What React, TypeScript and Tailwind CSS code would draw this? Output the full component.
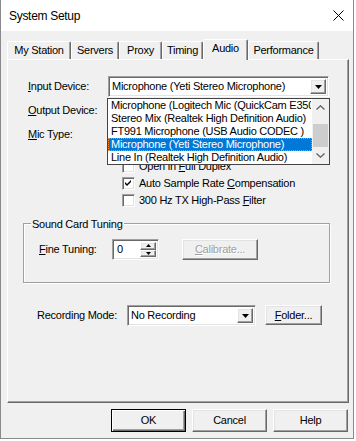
import React from 'react';

// classic win32 3d borders
const raised =
    'border border-t-white border-l-white border-r-[#696969] border-b-[#696969] shadow-[inset_-1px_-1px_0_#a0a0a0,inset_1px_1px_0_#e3e3e3]';
const sunken =
    'border border-t-[#a0a0a0] border-l-[#a0a0a0] border-r-white border-b-white shadow-[inset_1px_1px_0_#696969,inset_-1px_-1px_0_#e3e3e3]';

function Key({ children }: { children: React.ReactNode }) {
    return <span className="underline underline-offset-[1px] decoration-1">{children}</span>;
}

function DownTriangle() {
    return (
        <svg width="7" height="4" viewBox="0 0 7 4">
            <polygon points="0,0 7,0 3.5,4" fill="#000" />
        </svg>
    );
}

function Combo({ width, text }: { width: string; text: string }) {
    return (
        <div className={`${sunken} ${width} h-[21px] bg-white flex items-center p-[2px]`}>
            <span className="flex-1 pl-[1px] whitespace-nowrap overflow-hidden">{text}</span>
            <div className={`${raised} w-[16px] h-full bg-[#f0f0f0] flex items-center justify-center`}>
                <DownTriangle />
            </div>
        </div>
    );
}

function Tab({ label, width, active }: { label: string; width: string; active?: boolean }) {
    return (
        <div
            className={`${width} ${
                active ? 'h-[21px] -mb-[1px] relative z-10 pb-[3px]' : 'h-[18px]'
            } bg-[#f0f0f0] border-t border-l border-r border-t-white border-l-white border-r-[#696969] shadow-[inset_-1px_0_0_#a0a0a0] rounded-t-[2px] flex items-center justify-center whitespace-nowrap`}
        >
            {label}
        </div>
    );
}

function CheckBox({ checked, children }: { checked?: boolean; children: React.ReactNode }) {
    return (
        <div className="h-[17px] flex items-center gap-[4px] pl-[94px]">
            <div className={`${sunken} w-[13px] h-[13px] bg-white flex items-center justify-center`}>
                {checked && (
                    <svg width="7" height="7" viewBox="0 0 7 7">
                        <path d="M0 2 L2 4 L6 0 L6 2 L2 6 L0 4 Z" fill="#000" />
                    </svg>
                )}
            </div>
            <span>{children}</span>
        </div>
    );
}

function Button({ children, width, isDefault, disabled }: { children: React.ReactNode; width: string; isDefault?: boolean; disabled?: boolean }) {
    const frame = isDefault
        ? 'border border-black shadow-[inset_1px_1px_0_#fff,inset_-1px_-1px_0_#696969,inset_-2px_-2px_0_#a0a0a0]'
        : raised;
    return (
        <div
            className={`${frame} ${width} bg-[#f0f0f0] flex items-center justify-center ${
                disabled ? 'text-[#a0a0a0] [text-shadow:1px_1px_0_#fff]' : ''
            }`}
        >
            {children}
        </div>
    );
}

const devices = [
    'Microphone (Logitech Mic (QuickCam E3500))',
    'Stereo Mix (Realtek High Definition Audio)',
    'FT991 Microphone (USB Audio CODEC )',
    'Microphone (Yeti Stereo Microphone)',
    'Line In (Realtek High Definition Audio)',
];

export default function App() {
    return (
        <div className="w-[356px] h-[441px] bg-white overflow-hidden font-['Liberation_Sans',Arial,sans-serif] text-[11px] tracking-[-0.25px] text-black">
            <div className="w-[354px] h-[439px] border border-t-0 border-[#8a8a8a] bg-[#f0f0f0]">
                {/* Title bar */}
                <div className="h-[31px] bg-white flex items-center justify-between pl-[8px] pr-[9px]">
                    <span className="text-[12px] tracking-[-0.3px]">System Setup</span>
                    <svg width="11" height="11" viewBox="0 0 11 11">
                        <path d="M0.5 0.5 L10.5 10.5 M10.5 0.5 L0.5 10.5" stroke="#000" strokeWidth="1" />
                    </svg>
                </div>

                {/* Tabs */}
                <div className="mt-[8px] ml-[6px] h-[20px] flex items-end">
                    <Tab label="My Station" width="w-[64px]" />
                    <Tab label="Servers" width="w-[48px]" />
                    <Tab label="Proxy" width="w-[43px]" />
                    <Tab label="Timing" width="w-[41px]" />
                    <Tab label="Audio" width="w-[45px]" active />
                    <Tab label="Performance" width="w-[71px]" />
                </div>

                {/* Tab panel */}
                <div className="relative ml-[6px] w-[342px] h-[344px] border border-t-white border-l-white border-r-[#696969] border-b-[#696969] shadow-[inset_-1px_-1px_0_#a0a0a0]">
                    <div className="pt-[16px]">
                        <div className="flex items-center h-[21px] pl-[20px]">
                            <span className="w-[80px]">
                                <Key>I</Key>nput Device:
                            </span>
                            <Combo width="w-[221px]" text="Microphone (Yeti Stereo Microphone)" />
                        </div>
                        <div className="flex items-center h-[21px] pl-[20px] mt-[3px]">
                            <span className="w-[80px]">
                                <Key>O</Key>utput Device:
                            </span>
                            <Combo width="w-[221px]" text="" />
                        </div>
                        <div className="flex items-center h-[21px] pl-[20px] mt-[3px]">
                            <span className="w-[80px]">
                                <Key>M</Key>ic Type:
                            </span>
                            <Combo width="w-[221px]" text="" />
                        </div>

                        <div className="mt-[13px] pl-[20px]">
                            <CheckBox>
                                Open in <Key>F</Key>ull Duplex
                            </CheckBox>
                            <CheckBox checked>
                                Auto Sample Rate <Key>C</Key>ompensation
                            </CheckBox>
                            <CheckBox>
                                300 Hz TX High-Pass <Key>F</Key>ilter
                            </CheckBox>
                        </div>

                        {/* Sound Card Tuning group */}
                        <div className="relative ml-[15px] mt-[14px] w-[307px] h-[60px] border border-[#a0a0a0] shadow-[inset_1px_1px_0_#fff,1px_1px_0_#fff]">
                            <span className="absolute left-[7px] -top-[8px] px-[1px] bg-[#f0f0f0]">Sound Card Tuning</span>
                            <div className="flex items-center h-[21px] pl-[15px] mt-[15px]">
                                <span className="w-[73px]">
                                    <Key>F</Key>ine Tuning:
                                </span>
                                <div className={`${sunken} w-[47px] h-[21px] bg-white flex items-stretch p-[2px]`}>
                                    <span className="flex-1 pl-[2px] flex items-center">0</span>
                                    <div className="w-[16px] flex flex-col">
                                        <div className={`${raised} flex-1 bg-[#f0f0f0] flex items-center justify-center`}>
                                            <svg width="5" height="3" viewBox="0 0 5 3">
                                                <polygon points="2.5,0 5,3 0,3" fill="#000" />
                                            </svg>
                                        </div>
                                        <div className={`${raised} flex-1 bg-[#f0f0f0] flex items-center justify-center`}>
                                            <svg width="5" height="3" viewBox="0 0 5 3">
                                                <polygon points="0,0 5,0 2.5,3" fill="#000" />
                                            </svg>
                                        </div>
                                    </div>
                                </div>
                                <div className="ml-[23px] h-[21px] flex">
                                    <Button width="w-[76px]" disabled>
                                        <span>
                                            <Key>C</Key>alibrate...
                                        </span>
                                    </Button>
                                </div>
                            </div>
                        </div>

                        {/* Recording */}
                        <div className="flex items-center h-[21px] pl-[29px] mt-[22px]">
                            <span className="w-[90px]">Recording Mode:</span>
                            <Combo width="w-[129px]" text="No Recording" />
                            <div className="ml-[9px] h-[20px] flex self-start">
                                <Button width="w-[57px]">
                                    <span>
                                        <Key>F</Key>older...
                                    </span>
                                </Button>
                            </div>
                        </div>
                    </div>

                    {/* Open drop-down list of the Input Device combo */}
                    <div className="absolute left-[99px] top-[38px] w-[223px] h-[67px] border border-[#444] bg-white flex z-20">
                        <div className="flex-1 flex flex-col overflow-hidden">
                            {devices.map((d, i) => (
                                <div
                                    key={d}
                                    className={`h-[13px] leading-[11px] pl-[2px] whitespace-nowrap overflow-hidden border ${
                                        i === 3 ? 'bg-[#0078d7] text-white border-dotted border-[#ff8828]' : 'border-transparent'
                                    }`}
                                >
                                    {d}
                                </div>
                            ))}
                        </div>
                        <div className="w-[17px] flex flex-col bg-[#f0f0f0]">
                            <div className="h-[17px] flex items-center justify-center">
                                <svg width="9" height="5" viewBox="0 0 9 5">
                                    <path d="M0.5 4.5 L4.5 0.8 L8.5 4.5" fill="none" stroke="#606060" strokeWidth="1.3" />
                                </svg>
                            </div>
                            <div className="flex-1 flex flex-col pt-[8px] px-[1px]">
                                <div className="flex-1 bg-[#cdcdcd]" />
                            </div>
                            <div className="h-[17px] flex items-center justify-center">
                                <svg width="9" height="5" viewBox="0 0 9 5">
                                    <path d="M0.5 0.5 L4.5 4.2 L8.5 0.5" fill="none" stroke="#606060" strokeWidth="1.3" />
                                </svg>
                            </div>
                        </div>
                    </div>
                </div>

                {/* Dialog buttons */}
                <div className="mt-[6px] h-[23px] flex justify-end gap-[6px] pr-[5px]">
                    <Button width="w-[75px]" isDefault>
                        OK
                    </Button>
                    <Button width="w-[75px]">Cancel</Button>
                    <Button width="w-[75px]">Help</Button>
                </div>
            </div>
        </div>
    );
}
